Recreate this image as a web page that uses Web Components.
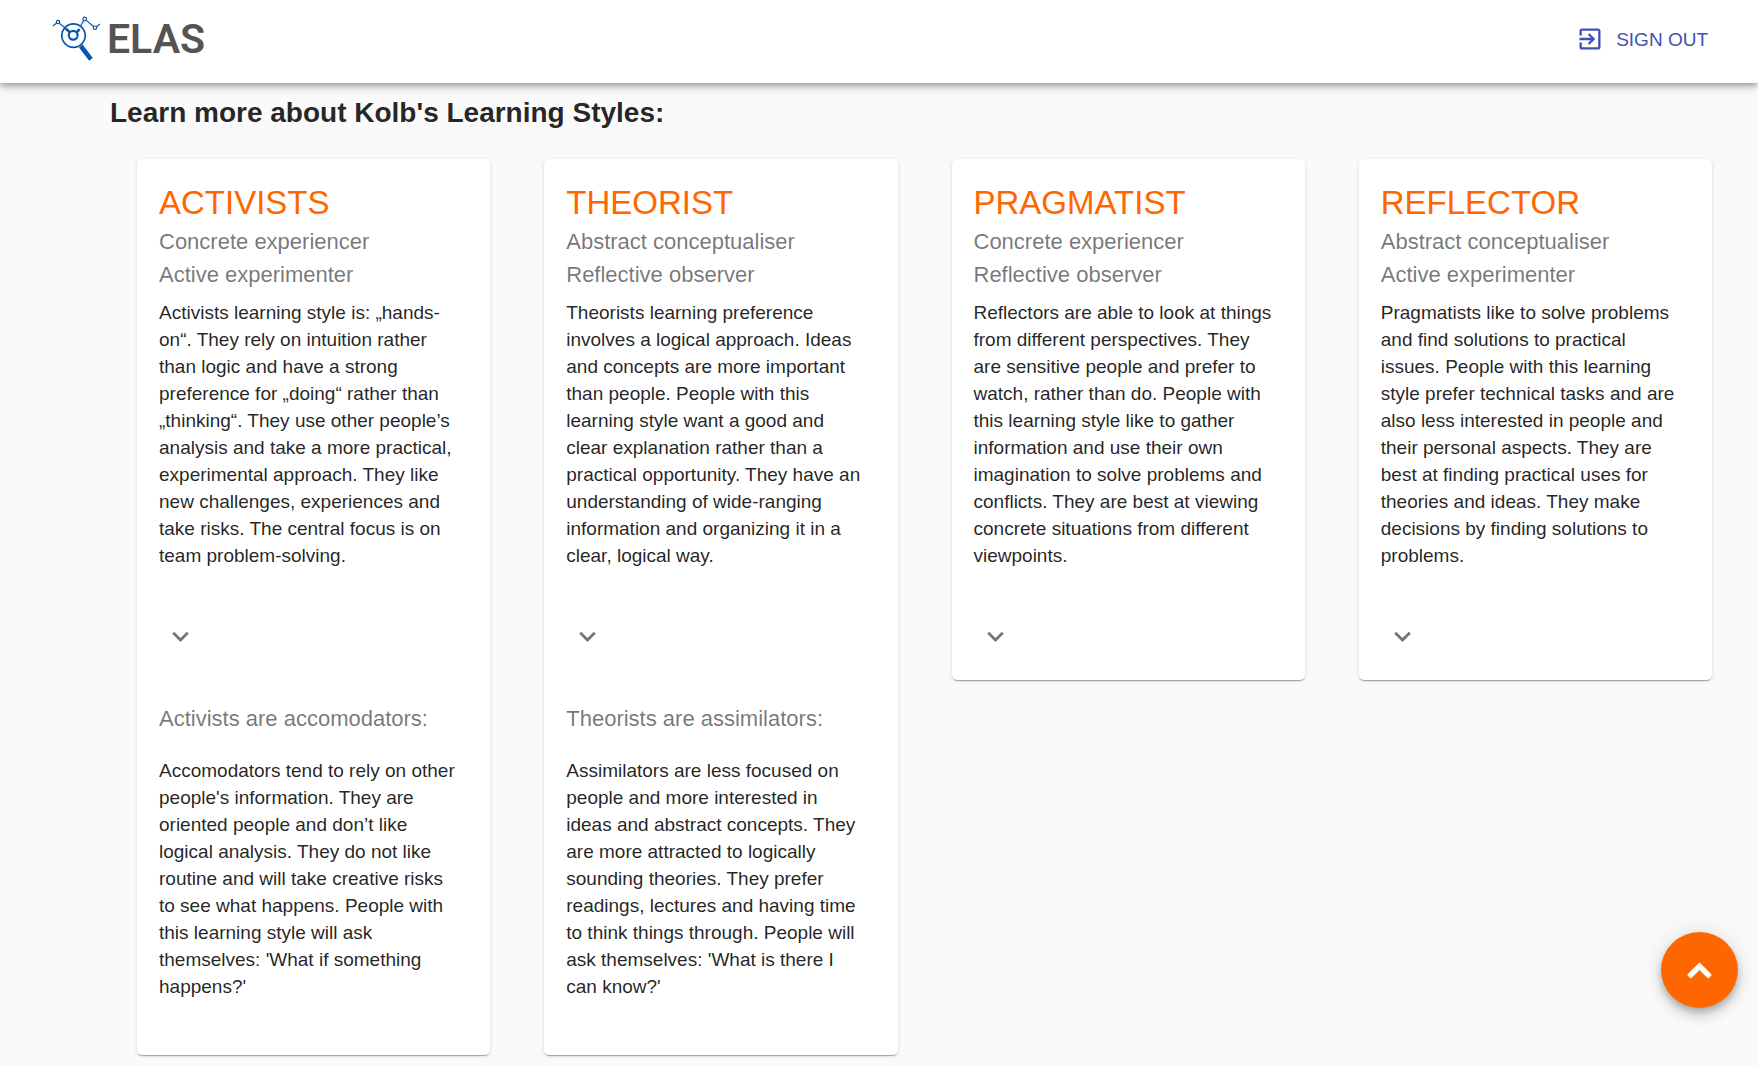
<!DOCTYPE html>
<html lang="en">
<head>
<meta charset="utf-8">
<meta name="viewport" content="width=device-width, initial-scale=1">
<title>ELAS</title>
<style>
  body {
    margin: 0;
    background: #fafafa;
    color: rgba(0, 0, 0, 0.87);
    font-family: "Liberation Sans", Arial, sans-serif;
    font-size: 19px;
    line-height: 27px;
  }
</style>
</head>
<body>
<elas-app-bar>
  <elas-logo slot="brand"></elas-logo>
  <elas-sign-out>SIGN OUT</elas-sign-out>
</elas-app-bar>
<elas-styles-section>
  <span slot="heading">Learn more about Kolb's Learning Styles:</span>
  <elas-style-card expanded>
    <span slot="title">ACTIVISTS</span>
    <span slot="first">Concrete experiencer</span>
    <span slot="second">Active experimenter</span>
    Activists learning style is: „hands-on“. They rely on intuition rather than logic and have a strong preference for „doing“ rather than „thinking“. They use other people’s analysis and take a more practical, experimental approach. They like new challenges, experiences and take risks. The central focus is on team problem-solving.
    <span slot="more-title">Activists are accomodators:</span>
    <span slot="more">Accomodators tend to rely on other people's information. They are oriented people and don’t like logical analysis. They do not like routine and will take creative risks to see what happens. People with this learning style will ask themselves: 'What if something happens?'</span>
  </elas-style-card>
  <elas-style-card expanded>
    <span slot="title">THEORIST</span>
    <span slot="first">Abstract conceptualiser</span>
    <span slot="second">Reflective observer</span>
    Theorists learning preference involves a logical approach. Ideas and concepts are more important than people. People with this learning style want a good and clear explanation rather than a practical opportunity. They have an understanding of wide-ranging information and organizing it in a clear, logical way.
    <span slot="more-title">Theorists are assimilators:</span>
    <span slot="more">Assimilators are less focused on people and more interested in ideas and abstract concepts. They are more attracted to logically sounding theories. They prefer readings, lectures and having time to think things through. People will ask themselves: 'What is there I can know?'</span>
  </elas-style-card>
  <elas-style-card>
    <span slot="title">PRAGMATIST</span>
    <span slot="first">Concrete experiencer</span>
    <span slot="second">Reflective observer</span>
    Reflectors are able to look at things from different perspectives. They are sensitive people and prefer to watch, rather than do. People with this learning style like to gather information and use their own imagination to solve problems and conflicts. They are best at viewing concrete situations from different viewpoints.
  </elas-style-card>
  <elas-style-card>
    <span slot="title">REFLECTOR</span>
    <span slot="first">Abstract conceptualiser</span>
    <span slot="second">Active experimenter</span>
    Pragmatists like to solve problems and find solutions to practical issues. People with this learning style prefer technical tasks and are also less interested in people and their personal aspects. They are best at finding practical uses for theories and ideas. They make decisions by finding solutions to problems.
  </elas-style-card>
</elas-styles-section>
<elas-scroll-top></elas-scroll-top>

<script>
  class ElasElement extends HTMLElement {
    constructor() {
      super();
      this.attachShadow({ mode: "open" }).innerHTML = this.constructor.markup;
    }
  }

  customElements.define("elas-app-bar", class extends ElasElement {
    static markup = `
      <style>
        :host { display: block; position: sticky; top: 0; z-index: 2; }
        header {
          box-sizing: border-box;
          height: 83px;
          padding: 0 42px 5px 52px;
          display: flex;
          align-items: center;
          justify-content: space-between;
          background: #fff;
          box-shadow: 0 3px 5px -1px rgba(0,0,0,.2), 0 5px 7px 0 rgba(0,0,0,.14), 0 1px 14px 0 rgba(0,0,0,.12);
        }
      </style>
      <header><slot name="brand"></slot><slot></slot></header>`;
  });

  customElements.define("elas-logo", class extends ElasElement {
    static markup = `
      <style>
        :host { display: block; }
        a { display: flex; align-items: center; gap: 5px; color: #545454; text-decoration: none;
            font: 600 41px/48px Roboto, sans-serif; }
        svg { display: block; }
      </style>
      <a href="#">
        <svg width="50" height="46" viewBox="52 16 50 46" fill="none" stroke="#0857ae" aria-hidden="true">
          <path d="M53 26 56.400 23.200M59.500 23.500 66 28.500M80 27 83.500 20.800M86.200 20.400 93.600 26.500M96.500 26.800 99.800 24" stroke-width="1.200"/>
          <circle cx="58" cy="22" r="1.700" stroke-width="1.200"/>
          <circle cx="84.700" cy="19" r="1.800" stroke-width="1.200"/>
          <circle cx="95" cy="27.700" r="1.700" stroke-width="1.200"/>
          <circle cx="73.500" cy="35.600" r="11.700" stroke-width="1.700"/>
          <path d="M65.800 28.800 70.300 32.600M79.600 29.200 76 33" stroke-width="2.600"/>
          <circle cx="73.200" cy="35.300" r="4.400" stroke-width="2.200"/>
          <path d="M80.800 46 91 59.400" stroke-width="4.600"/>
        </svg>
        <span>ELAS</span>
      </a>`;
  });

  customElements.define("elas-sign-out", class extends ElasElement {
    static markup = `
      <style>
        :host { display: block; }
        button { display: flex; align-items: center; gap: 12px; padding: 8px; border: 0; background: none;
                 color: #3f51b5; font: inherit; line-height: 33px; cursor: pointer; }
        svg { display: block; fill: currentColor; }
      </style>
      <button type="button">
        <svg width="28" height="28" viewBox="0 0 24 24" aria-hidden="true"><path d="M10.090 15.590 11.500 17l5-5-5-5-1.410 1.410L12.670 11H3v2h9.670l-2.580 2.590zM19 3H5c-1.110 0-2 .9-2 2v4h2V5h14v14H5v-4H3v4c0 1.100.89 2 2 2h14c1.100 0 2-.9 2-2V5c0-1.100-.9-2-2-2z"/></svg>
        <slot></slot>
      </button>`;
  });

  customElements.define("elas-styles-section", class extends ElasElement {
    static markup = `
      <style>
        :host { display: block; }
        main { padding: 8px 19px 10px 110px; }
        h1 { margin: 0 0 24px; font-size: 28px; line-height: 44px; font-weight: 700; }
        .cards { display: grid; grid-template-columns: repeat(4, minmax(0, 1fr)); gap: 54px; align-items: start; padding: 0 27px; }
      </style>
      <main>
        <h1><slot name="heading"></slot></h1>
        <div class="cards"><slot></slot></div>
      </main>`;
  });

  customElements.define("elas-style-card", class extends ElasElement {
    static markup = `
      <style>
        :host { display: block; }
        article { background: #fff; border-radius: 5px;
          box-shadow: 0 3px 1px -2px rgba(0,0,0,.2), 0 1px 1px 0 rgba(0,0,0,.14), 0 1px 4px 0 rgba(0,0,0,.12); }
        .content { padding: 22px 32px 24px 22px; }
        h2 { margin: 0; color: #f60; font-size: 33px; line-height: 44px; font-weight: 400; }
        .sub { margin: 0; color: rgba(0,0,0,.54); font-size: 22px; line-height: 33px; font-weight: 400; }
        p { margin: 0; }
        .lead { margin-top: 8px; }
        .actions { display: flex; padding: 11px; }
        button { display: flex; padding: 16px; border: 0; border-radius: 50%; background: none; color: rgba(0,0,0,.54); cursor: pointer; }
        svg { display: block; fill: currentColor; }
        .more { display: none; padding: 22px 32px 55px 22px; }
        :host([expanded]) .more { display: flex; flex-direction: column; gap: 22px; }
      </style>
      <article>
        <div class="content">
          <h2><slot name="title"></slot></h2>
          <div class="sub"><slot name="first"></slot></div>
          <div class="sub"><slot name="second"></slot></div>
          <p class="lead"><slot></slot></p>
        </div>
        <div class="actions">
          <button type="button" aria-label="Show more">
            <svg width="33" height="33" viewBox="0 0 24 24" aria-hidden="true"><path d="M16.590 8.590 12 13.170 7.410 8.590 6 10l6 6 6-6z"/></svg>
          </button>
        </div>
        <div class="more">
          <h3 class="sub"><slot name="more-title"></slot></h3>
          <p><slot name="more"></slot></p>
        </div>
      </article>`;
    connectedCallback() {
      const button = this.shadowRoot.querySelector("button");
      button.setAttribute("aria-expanded", this.hasAttribute("expanded"));
      button.onclick = () => button.setAttribute("aria-expanded", this.toggleAttribute("expanded"));
    }
  });

  customElements.define("elas-scroll-top", class extends ElasElement {
    static markup = `
      <style>
        :host { display: block; position: fixed; right: 20px; bottom: 58px; z-index: 3; }
        button { display: flex; align-items: center; justify-content: center; width: 77px; height: 76px; padding: 0; border: 0;
          border-radius: 50%; background: #f60; cursor: pointer;
          box-shadow: 0 4px 7px -1px rgba(0,0,0,.2), 0 8px 14px 0 rgba(0,0,0,.14), 0 1px 25px 0 rgba(0,0,0,.12); }
      </style>
      <button type="button" aria-label="Back to top">
        <svg width="27" height="27" viewBox="0 101 1792 1792" fill="#fff" aria-hidden="true"><path d="M1683 1331l-166 165q-19 19-45 19t-45-19l-531-531-531 531q-19 19-45 19t-45-19l-166-165q-19-19-19-45.500t19-45.500l742-741q19-19 45-19t45 19l742 741q19 19 19 45.500t-19 45.500z"/></svg>
      </button>`;
    connectedCallback() {
      this.shadowRoot.querySelector("button").onclick = () => window.scrollTo({ top: 0, behavior: "smooth" });
    }
  });
</script>
</body>
</html>
